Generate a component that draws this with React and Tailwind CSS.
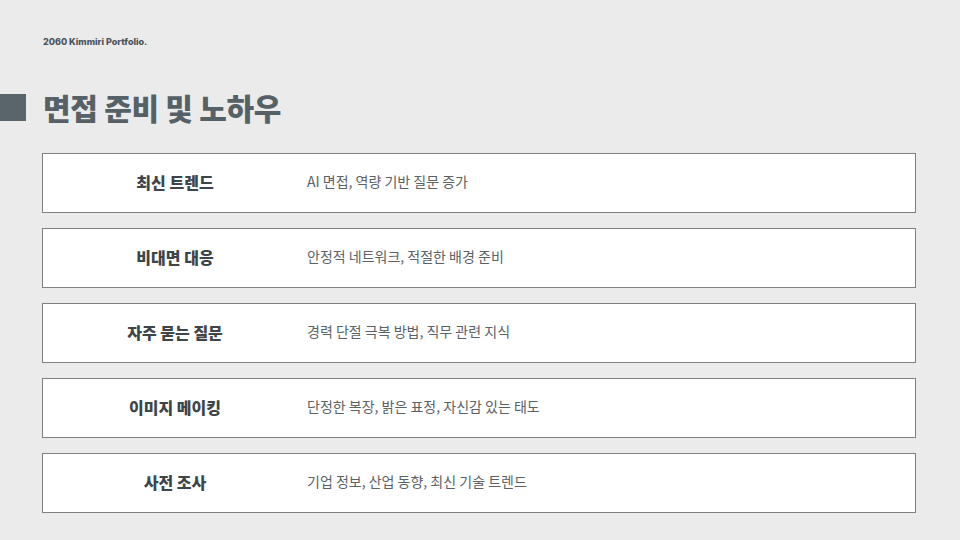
const ITEMS = [
  ['최신 트렌드', 'AI 면접, 역량 기반 질문 증가'],
  ['비대면 대응', '안정적 네트워크, 적절한 배경 준비'],
  ['자주 묻는 질문', '경력 단절 극복 방법, 직무 관련 지식'],
  ['이미지 메이킹', '단정한 복장, 밝은 표정, 자신감 있는 태도'],
  ['사전 조사', '기업 정보, 산업 동향, 최신 기술 트렌드'],
]

export default function App() {
  return (
    <div
      className="w-[960px] h-[540px] bg-[#ebebeb] overflow-hidden flex flex-col"
      style={{ fontFamily: '"Noto Sans CJK KR", "Noto Sans", sans-serif' }}
    >
      <div className="pl-[43px] pt-[35px] h-[60px] text-[9px] font-extrabold text-[#4a545a]" style={{ fontFamily: 'Inter, "Noto Sans CJK KR", sans-serif' }}>
        2060 Kimmiri Portfolio.
      </div>

      <div className="flex items-center gap-[17px] h-[93px] pt-[1px]">
        <div className="w-[26px] h-[27px] bg-[#5a656b]" />
        <h1 className="text-[30px] font-extrabold text-[#566167] tracking-[-0.3px] leading-none">면접 준비 및 노하우</h1>
      </div>

      <div className="flex flex-col gap-[15px] pl-[42px] w-[916px]">
        {ITEMS.map(([label, desc]) => (
          <div key={label} className="h-[60px] bg-white border border-[#7d8183] flex items-center pb-[3px]">
            <div className="w-[264px] text-center text-[16px] font-extrabold text-[#3d4549]">{label}</div>
            <div className="text-[14px] text-[#5b6266]">{desc}</div>
          </div>
        ))}
      </div>
    </div>
  )
}
